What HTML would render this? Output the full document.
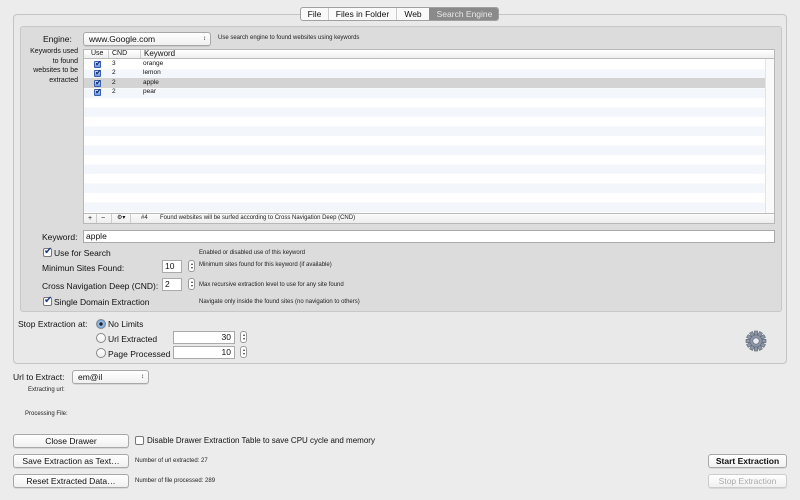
<!DOCTYPE html>
<html><head><style>
*{box-sizing:border-box;margin:0;padding:0}
body{width:800px;height:500px;background:#ececec;font-family:"Liberation Sans",sans-serif;color:#111;position:relative;overflow:hidden;font-size:9px}
.a{position:absolute;white-space:nowrap}
.s{font-size:6px;color:#222}
.btn{position:absolute;height:14px;border:1px solid #a8a8a8;border-radius:3px;background:linear-gradient(#fff,#f0f0f0);font-size:8.5px;text-align:center;line-height:12px;box-shadow:0 1px 0 rgba(0,0,0,.08)}
.fld{position:absolute;background:#fff;border:1px solid #aaa;font-size:8.5px;line-height:11px;padding-left:2px}
.cb{position:absolute;width:9px;height:9px;border:1px solid #777;border-radius:2px;background:#fff}
.cb.on::after{content:"\2714";position:absolute;left:0;top:-3px;font-size:10px;color:#1a3a8a}
.rd{position:absolute;width:10px;height:10px;border:1px solid #888;border-radius:50%;background:linear-gradient(#fff,#eee)}
.rd.on{background:radial-gradient(circle,#222 0 1.5px,#9cc3f0 2px,#5a95dd 5px)}
.st{position:absolute;width:7px;height:12px;border:1px solid #999;border-radius:3px;background:#fff}
.st::before{content:"";position:absolute;left:1.5px;top:2px;border-left:1.5px solid transparent;border-right:1.5px solid transparent;border-bottom:2px solid #333}
.st::after{content:"";position:absolute;left:1.5px;bottom:2px;border-left:1.5px solid transparent;border-right:1.5px solid transparent;border-top:2px solid #333}
.tk{position:absolute;width:7px;height:7px;border:1px solid #3a5fb0;background:linear-gradient(#cfe0ff,#6a93e0);border-radius:1px}
.tk::after{content:"\2714";position:absolute;left:0;top:-3px;font-size:8px;color:#102a70}
</style></head><body>
<div class="a" style="left:13px;top:14px;width:774px;height:350px;border:1px solid #c4c4c4;border-radius:4px;background:#e9e9e9"></div>
<div class="a" style="left:20px;top:26px;width:762px;height:286px;border:1px solid #c8c8c8;border-radius:3px;background:#dcdcdc"></div>
<div class="a" style="left:300px;top:7px;height:14px;width:199px;border:1px solid #a0a0a0;border-radius:3px;background:#fafafa;font-size:8.5px;line-height:12px;overflow:hidden">
<span class="a" style="left:0;width:28px;text-align:center;border-right:1px solid #ccc">File</span>
<span class="a" style="left:28px;width:68px;text-align:center;border-right:1px solid #ccc">Files in Folder</span>
<span class="a" style="left:96px;width:32px;text-align:center">Web</span>
<span class="a" style="left:128px;width:71px;height:14px;text-align:center;background:#8a8a8a;color:#e8e8e8">Search Engine</span>
</div>
<div class="a" style="left:43px;top:34px;font-size:8.5px">Engine:</div>
<div class="btn" style="left:83px;top:32px;width:128px;text-align:left;padding-left:5px;font-size:8.5px">www.Google.com<span style="position:absolute;right:4px;font-size:6px">&#8597;</span></div>
<div class="a s" style="left:218px;top:35px">Use search engine to found websites using keywords</div>
<div class="a" style="left:28px;top:47px;width:50px;text-align:right;font-size:7px;line-height:9.5px;white-space:normal">Keywords used to found websites to be extracted</div>
<div class="a" style="left:83px;top:49px;width:692px;height:175px;border:1px solid #b8b8b8;background:repeating-linear-gradient(#fff 0 9.5px,#f3f6fa 9.5px 19px);background-position:0 10px"></div>
<div class="a" style="left:84px;top:50px;width:690px;height:9px;background:linear-gradient(#fff,#eee);border-bottom:1px solid #bbb;font-size:7px;line-height:8px">
<span class="a" style="left:7px">Use</span><span class="a" style="left:24px;border-left:1px solid #ccc;padding-left:3px">CND</span><span class="a" style="left:56px;border-left:1px solid #ccc;padding-left:3px;font-size:8px">Keyword</span></div>
<div class="a" style="left:84px;top:78px;width:681px;height:9.5px;background:#d4d4d4"></div>
<div class="a" style="left:765px;top:59px;width:9px;height:154px;background:#fafafa;border-left:1px solid #e4e4e4"></div>
<div style="font-size:6.5px">
<div class="tk" style="left:94px;top:61px"></div><div class="a" style="left:112px;top:60px">3</div><div class="a" style="left:143px;top:60px">orange</div>
<div class="tk" style="left:94px;top:70px"></div><div class="a" style="left:112px;top:69px">2</div><div class="a" style="left:143px;top:69px">lemon</div>
<div class="tk" style="left:94px;top:80px"></div><div class="a" style="left:112px;top:79px">2</div><div class="a" style="left:143px;top:79px">apple</div>
<div class="tk" style="left:94px;top:89px"></div><div class="a" style="left:112px;top:88px">2</div><div class="a" style="left:143px;top:88px">pear</div>
</div>
<div class="a" style="left:84px;top:213px;width:690px;height:10px;background:linear-gradient(#fafafa,#eee);border-top:1px solid #bbb;font-size:7px;line-height:9px">
<span class="a" style="left:4px">+</span><span class="a" style="left:12px;border-left:1px solid #ccc;padding-left:4px;height:9px">&minus;</span><span class="a" style="left:27px;border-left:1px solid #ccc;border-right:1px solid #ccc;padding:0 5px;height:9px;font-size:6px">&#9881;&#9662;</span><span class="a s" style="left:57px">#4</span><span class="a s" style="left:76px">Found websites will be surfed according to Cross Navigation Deep (CND)</span></div>
<div class="a" style="left:42px;top:232px;font-size:8.5px">Keyword:</div>
<div class="fld" style="left:83px;top:230px;width:692px;height:13px">apple</div>
<div class="cb on" style="left:43px;top:248px"></div><div class="a" style="left:54px;top:248px;font-size:8.5px">Use for Search</div>
<div class="a s" style="left:199px;top:250px">Enabled or disabled use of this keyword</div>
<div class="a" style="left:42px;top:263px;font-size:8.5px">Minimun Sites Found:</div>
<div class="fld" style="left:162px;top:260px;width:20px;height:13px">10</div><div class="st" style="left:188px;top:260px"></div>
<div class="a s" style="left:199px;top:262px">Minimum sites found  for this keyword (if available)</div>
<div class="a" style="left:42px;top:281px;font-size:8.5px">Cross Navigation Deep (CND):</div>
<div class="fld" style="left:162px;top:278px;width:20px;height:13px">2</div><div class="st" style="left:188px;top:278px"></div>
<div class="a s" style="left:199px;top:282px">Max recursive extraction level to use for any site found</div>
<div class="cb on" style="left:43px;top:297px"></div><div class="a" style="left:54px;top:297px;font-size:8.5px">Single Domain Extraction</div>
<div class="a s" style="left:199px;top:299px">Navigate only inside the found sites (no navigation to others)</div>
<div class="a" style="left:18px;top:319px;font-size:8.5px">Stop Extraction at:</div>
<div class="rd on" style="left:96px;top:319px"></div><div class="a" style="left:108px;top:319px;font-size:8.5px">No Limits</div>
<div class="rd" style="left:96px;top:333px"></div><div class="a" style="left:108px;top:334px;font-size:8.5px">Url Extracted</div>
<div class="fld" style="left:173px;top:331px;width:62px;height:13px;text-align:right;padding-right:3px">30</div><div class="st" style="left:240px;top:331px"></div>
<div class="rd" style="left:96px;top:348px"></div><div class="a" style="left:108px;top:349px;font-size:8.5px">Page Processed</div>
<div class="fld" style="left:173px;top:346px;width:62px;height:13px;text-align:right;padding-right:3px">10</div><div class="st" style="left:240px;top:346px"></div>
<svg class="a" style="left:745px;top:330px" width="22" height="22" viewBox="-11 -11 22 22">
<g fill="#8d97a8" stroke="#5d6470" stroke-width=".6"><circle r="7.5"/>
<g id="t"><rect x="-1.6" y="-10" width="3.2" height="4"/></g>
<use href="#t" transform="rotate(30)"/><use href="#t" transform="rotate(60)"/><use href="#t" transform="rotate(90)"/><use href="#t" transform="rotate(120)"/><use href="#t" transform="rotate(150)"/><use href="#t" transform="rotate(180)"/><use href="#t" transform="rotate(210)"/><use href="#t" transform="rotate(240)"/><use href="#t" transform="rotate(270)"/><use href="#t" transform="rotate(300)"/><use href="#t" transform="rotate(330)"/></g>
<circle r="3.2" fill="#e8ecf2" stroke="#5d6470" stroke-width=".6"/></svg>
<div class="a" style="left:13px;top:372px;font-size:8.5px">Url to Extract:</div>
<div class="btn" style="left:72px;top:370px;width:77px;text-align:left;padding-left:5px">em@il<span style="position:absolute;right:4px;font-size:6px">&#8597;</span></div>
<div class="a s" style="left:28px;top:387px">Extracting url:</div>
<div class="a s" style="left:25px;top:411px">Processing File:</div>
<div class="btn" style="left:13px;top:434px;width:116px">Close Drawer</div>
<div class="cb" style="left:135px;top:436px"></div><div class="a" style="left:147px;top:436px;font-size:8px">Disable Drawer Extraction Table to save CPU cycle and memory</div>
<div class="btn" style="left:13px;top:454px;width:116px">Save Extraction as Text…</div>
<div class="a s" style="left:135px;top:458px">Number of url extracted: 27</div>
<div class="btn" style="left:13px;top:474px;width:116px">Reset Extracted Data…</div>
<div class="a s" style="left:135px;top:478px">Number of file processed: 289</div>
<div class="btn" style="left:708px;top:454px;width:79px;font-weight:bold">Start Extraction</div>
<div class="btn" style="left:708px;top:474px;width:79px;color:#aaa;border-color:#ccc">Stop Extraction</div>
</body></html>
